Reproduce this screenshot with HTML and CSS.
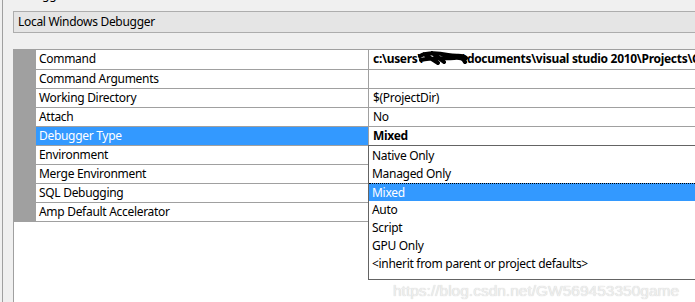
FILE: index.html
```html
<!DOCTYPE html>
<html lang="en">
<head>
  <meta charset="UTF-8" />
  <title>Debugging</title>
  <link rel="stylesheet" href="styles.css">
</head>
<body>
  <div class="panel">
    <div class="title"><span>Debugger to launch:</span></div>
    <div class="combo">Local Windows Debugger</div>

    <!-- Property grid -->
    <div class="grid">
      <div class="row">
        <div class="gut"></div>
        <div class="name">Command</div>
        <div class="val bold">c:\users\<svg class="scribble" width="50" height="15" viewBox="0 0 50 15"><path d="M2 6 C10 2 20 3 30 5 S44 4 48 8 M3 10 C14 7 26 9 36 8 S46 11 47 12 M6 4 L20 13 M14 3 L26 12" stroke="#000" stroke-width="4" fill="none" stroke-linecap="round"/></svg>\documents\visual studio 2010\Projects\C</div>
      </div>
      <div class="row">
        <div class="gut"></div>
        <div class="name">Command Arguments</div>
        <div class="val"></div>
      </div>
      <div class="row">
        <div class="gut"></div>
        <div class="name">Working Directory</div>
        <div class="val">$(ProjectDir)</div>
      </div>
      <div class="row">
        <div class="gut"></div>
        <div class="name">Attach</div>
        <div class="val">No</div>
      </div>
      <div class="row selected">
        <div class="gut"></div>
        <div class="name">Debugger Type</div>
        <div class="val bold">Mixed
          <ul class="dropdown">
            <li>Native Only</li>
            <li>Managed Only</li>
            <li class="current">Mixed</li>
            <li>Auto</li>
            <li>Script</li>
            <li>GPU Only</li>
            <li>&lt;inherit from parent or project defaults&gt;</li>
          </ul>
        </div>
      </div>
      <div class="row">
        <div class="gut"></div>
        <div class="name">Environment</div>
        <div class="val"></div>
      </div>
      <div class="row">
        <div class="gut"></div>
        <div class="name">Merge Environment</div>
        <div class="val"></div>
      </div>
      <div class="row">
        <div class="gut"></div>
        <div class="name">SQL Debugging</div>
        <div class="val"></div>
      </div>
      <div class="row">
        <div class="gut"></div>
        <div class="name">Amp Default Accelerator</div>
        <div class="val"></div>
      </div>
    </div>
  </div>

  <div class="watermark">https://blog.csdn.net/GW569453350game</div>
</body>
</html>
```

FILE: styles.css
```css
body {
  margin: 0;
  width: 695px;
  height: 302px;
  overflow: hidden;
  background: #f0f0f0;
  font-family: "Noto Sans", "Open Sans", sans-serif;
  font-size: 12px;
  letter-spacing: -0.3px;
  color: #000;
  position: relative;
}
.panel {
  margin-left: 2px;
  border-left: 1px solid #a0a0a0;
  padding-left: 10px;
  height: 302px;
}
.title {
  height: 11px;
  overflow: hidden;
}
.title span {
  display: block;
  line-height: 16px;
  margin-top: -13px;
}
.combo {
  height: 20px;
  line-height: 20px;
  border: 1px solid #adadad;
  background: #e5e5e5;
  padding-left: 4px;
  margin-right: -20px;
}
/* Property grid */
.grid {
  margin-top: 16px;
  margin-right: -40px;
  height: 260px;
  background: #fff;
  border-top: 1px solid #a0a0a0;
  border-left: 1px solid #a0a0a0;
}
.row {
  display: grid;
  grid-template-columns: 22px 332px 1fr;
  height: 19px;
}
.row:first-child {
  height: 20px;
}
.gut {
  background: #a0a0a0;
}
.name, .val {
  border-bottom: 1px solid #a0a0a0;
  line-height: 18px;
  white-space: nowrap;
}
.name {
  padding-left: 3px;
}
.val {
  border-left: 1px solid #a0a0a0;
  padding-left: 4px;
  position: relative;
}
.bold {
  font-weight: bold;
}
.selected .name {
  background: #3399ff;
  color: #fff;
}
.scribble {
  vertical-align: middle;
  margin: -4px -6px 0 -4px;
}
/* Drop-down list */
.dropdown {
  position: absolute;
  top: 100%;
  left: -1px;
  width: 360px;
  height: 126px;
  margin: 0;
  padding: 1px 0 6px;
  list-style: none;
  background: #fff;
  border: 1px solid #646464;
  font-weight: normal;
  z-index: 2;
}
.dropdown li {
  height: 18px;
  line-height: 18px;
  padding-left: 3px;
}
.dropdown li.current {
  background: #3399ff;
  color: #fff;
  border-top: 1px dotted #000;
  height: 17px;
  line-height: 17px;
}
.watermark {
  position: absolute;
  left: 393px;
  top: 282px;
  font-family: "Liberation Sans", sans-serif;
  font-size: 15.5px;
  letter-spacing: 0;
  color: #efefef;
  text-shadow: 0 0 1px #c4c4c4;
  z-index: 3;
}
```
